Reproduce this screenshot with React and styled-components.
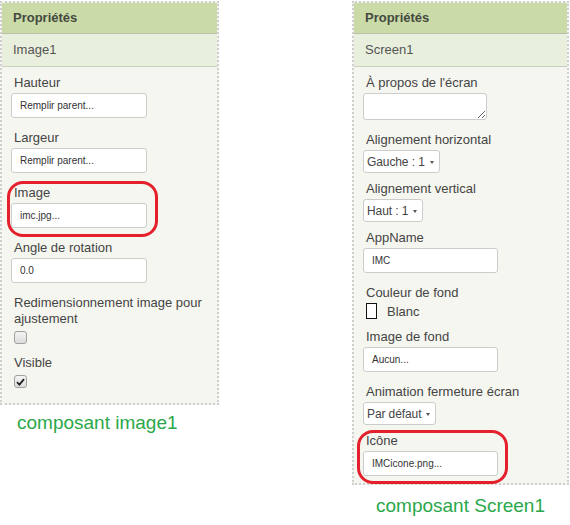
import React from "react";
import styled, { createGlobalStyle } from "styled-components";

const GlobalStyle = createGlobalStyle`
  body {
    margin: 0;
    background: #ffffff;
    font-family: "Liberation Sans", Arial, sans-serif;
  }
`;

const Page = styled.div`
  display: flex;
  align-items: flex-start;
  gap: ${(props) => props.gap}px;
  width: 570px;
  height: 525px;
`;

const Column = styled.div`
  display: flex;
  flex-direction: column;
  width: ${(props) => props.width}px;
`;

const Panel = styled.div`
  border: 2px dotted #cfcfcf;
  background: #f6f6f0;
  margin-top: 1px;
`;

const PanelTitle = styled.div`
  height: 30px;
  line-height: 30px;
  padding-left: 11px;
  background: #cbdba8;
  border-bottom: 1px solid #b9c0a9;
  font-size: 13px;
  font-weight: bold;
  color: #454a40;
`;

const ComponentName = styled.div`
  height: 32px;
  line-height: 32px;
  padding-left: 11px;
  background: #e9efdd;
  border-bottom: 1px solid #c9cdc0;
  font-size: 13px;
  color: #555;
`;

const Field = styled.div`
  position: relative;
  display: flex;
  flex-direction: column;
  align-items: flex-start;
`;

const Highlight = styled.span`
  position: absolute;
  top: ${(props) => props.top}px;
  left: ${(props) => props.left}px;
  width: 145px;
  height: ${(props) => props.height}px;
  border: 3px solid #e3202b;
  border-radius: 16px;
  pointer-events: none;
`;

const Label = styled.div`
  padding-left: 3px;
  font-size: 13px;
  line-height: 16px;
  color: #444;
  margin-bottom: 2px;
`;

const TextBox = styled.div`
  box-sizing: border-box;
  width: ${(props) => props.width || 136}px;
  height: 25px;
  line-height: 23px;
  padding-left: 8px;
  margin-bottom: 12px;
  background: #fff;
  border: 1px solid #cccccc;
  border-radius: 3px;
  font-size: 10px;
  color: #333;
`;

const PanelBody = styled.div`
  padding: 8px 9px ${(props) => props.bottom}px 9px;

  & > ${Field}:last-child ${TextBox} {
    margin-bottom: 0;
  }
`;

const TextArea = styled.textarea`
  box-sizing: border-box;
  width: 124px;
  height: 27px;
  margin: 0 0 12px 0;
  padding: 0;
  background: #fff;
  border: 1px solid #cccccc;
  border-radius: 3px;
  resize: both;
  outline: none;
`;

const Select = styled.div`
  box-sizing: border-box;
  display: flex;
  align-items: center;
  gap: 5px;
  height: 23px;
  padding: 0 5px 0 3px;
  margin-bottom: 8px;
  background: #fff;
  border: 1px solid #cccccc;
  border-radius: 3px;
  font-size: 12px;
  letter-spacing: -0.1px;
  color: #444;
`;

const Caret = styled.span`
  width: 0;
  height: 0;
  border-left: 2px solid transparent;
  border-right: 2px solid transparent;
  border-top: 3px solid #555;
  margin-top: 1px;
`;

const ColorRow = styled.div`
  display: flex;
  align-items: center;
  gap: 10px;
  padding-left: 3px;
  margin-bottom: 10px;
  font-size: 13px;
  color: #444;
`;

const Swatch = styled.span`
  box-sizing: border-box;
  width: 11px;
  height: 16px;
  background: #fff;
  border: 1px solid #111;
`;

const Checkbox = styled.span`
  box-sizing: border-box;
  display: flex;
  align-items: center;
  justify-content: center;
  width: 13px;
  height: 13px;
  margin: 2px 0 ${(props) => props.after}px 3px;
  border: 1px solid #a0a0a0;
  border-radius: 3px;
  background: linear-gradient(#f4f4f4, #dcdcdc);
`;

const Caption = styled.div`
  margin-top: ${(props) => props.top}px;
  padding-left: ${(props) => props.left}px;
  font-size: 19px;
  line-height: 22px;
  color: #2aa84a;
`;

const Check = () => (
  <svg width="9" height="8" viewBox="0 0 9 8">
    <path d="M1 4.2 L3.4 6.6 L8 1.2" fill="none" stroke="#222" strokeWidth="1.8" />
  </svg>
);

const Text = ({ label, value, width, children }) => (
  <Field>
    <Label>{label}</Label>
    <TextBox width={width}>{value}</TextBox>
    {children}
  </Field>
);

const Choice = ({ label, value }) => (
  <Field>
    <Label>{label}</Label>
    <Select>
      {value}
      <Caret />
    </Select>
  </Field>
);

export default function App() {
  return (
    <>
      <GlobalStyle />
      <Page gap={133}>
        <Column width={219}>
          <Panel>
            <PanelTitle>Propriétés</PanelTitle>
            <ComponentName>Image1</ComponentName>
            <PanelBody bottom={15}>
              <Text label="Hauteur" value="Remplir parent..." />
              <Text label="Largeur" value="Remplir parent..." />
              <Text label="Image" value="imc.jpg...">
                <Highlight top={-4} left={-4} height={50} />
              </Text>
              <Text label="Angle de rotation" value="0.0" />
              <Field>
                <Label>
                  Redimensionnement image pour
                  <br />
                  ajustement
                </Label>
                <Checkbox after={11} />
              </Field>
              <Field>
                <Label>Visible</Label>
                <Checkbox after={0}>
                  <Check />
                </Checkbox>
              </Field>
            </PanelBody>
          </Panel>
          <Caption top={7} left={17}>
            composant image1
          </Caption>
        </Column>
        <Column width={217}>
          <Panel>
            <PanelTitle>Propriétés</PanelTitle>
            <ComponentName>Screen1</ComponentName>
            <PanelBody bottom={7}>
              <Field>
                <Label>À propos de l'écran</Label>
                <TextArea readOnly />
              </Field>
              <Choice label="Alignement horizontal" value="Gauche : 1" />
              <Choice label="Alignement vertical" value="Haut : 1" />
              <Text label="AppName" value="IMC" width={135} />
              <Field>
                <Label>Couleur de fond</Label>
                <ColorRow>
                  <Swatch />
                  Blanc
                </ColorRow>
              </Field>
              <Text label="Image de fond" value="Aucun..." width={135} />
              <Choice label="Animation fermeture écran" value="Par défaut" />
              <Text label="Icône" value="IMCicone.png..." width={135}>
                <Highlight top={-3} left={-6} height={48} />
              </Text>
            </PanelBody>
          </Panel>
          <Caption top={10} left={24}>
            composant Screen1
          </Caption>
        </Column>
      </Page>
    </>
  );
}
